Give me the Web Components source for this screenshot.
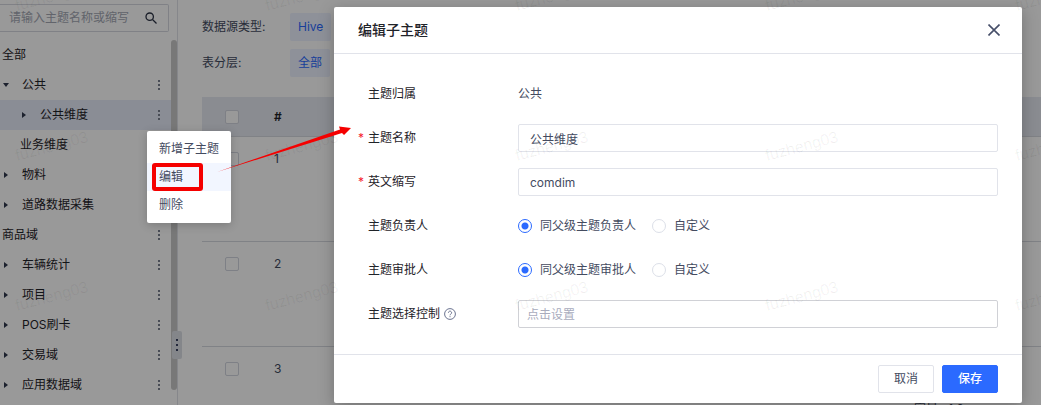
<!DOCTYPE html>
<html lang="zh-CN">
<head>
<meta charset="UTF-8">
<meta name="viewport" content="width=device-width, initial-scale=1">
<title>编辑子主题</title>
<style>
    html, body { height: 100%; margin: 0; }
    body {
        --primary: #2b6aff;
        --text: #1f2329;
        --text-2: #444b5f;
        --line: #e1e3ea;
        font: 12px/20px Inter, "Noto Sans CJK SC", sans-serif;
        color: var(--text);
        background: #fff;
        overflow: hidden;
    }
</style>
</head>
<body>
<topic-page></topic-page>

<script>
class BaseElement extends HTMLElement {
    constructor() {
        super();
        this.attachShadow({ mode: 'open' });
    }

    connectedCallback() {
        this.shadowRoot.innerHTML = this.template();
    }
}

// One line of the topic tree: caret, name, "more" button
class TreeItem extends BaseElement {
    template() {
        const caret = this.getAttribute('caret');
        const path = caret === 'open' ? 'M0 1h6L3 5z' : 'M1 0v6l4-3z';
        return `
            <style>
                :host { display: flex; align-items: center; height: 30px; padding: 0 7px 0 2px; }
                :host([level="1"]) { padding-left: 3px; }
                :host([level="2"]) { padding-left: 21px; }
                :host([level="leaf"]) { padding-left: 20px; }
                :host([active]) { background: #e6ebf8; }
                .caret { width: 6px; height: 6px; margin-right: 13px; fill: #30384d; }
                .name { flex: 1; white-space: nowrap; }
                button { display: flex; padding: 4px; border: 0; background: none; }
                button svg { width: 2px; height: 10px; fill: #7b8190; }
            </style>
            ${caret ? `<svg class="caret" viewBox="0 0 6 6"><path d="${path}"/></svg>` : ''}
            <span class="name"><slot></slot></span>
            ${this.hasAttribute('more') ? `
            <button type="button" aria-label="更多">
                <svg viewBox="0 0 2 10"><path d="M0 0h2v2H0zM0 4h2v2H0zM0 8h2v2H0z"/></svg>
            </button>` : ''}
        `;
    }
}
customElements.define('tree-item', TreeItem);

class TopicTree extends BaseElement {
    template() {
        return `
            <style>
                :host { display: flex; flex-direction: column; box-sizing: border-box; border-right: 1px solid #dfe1e8; position: relative; }
                .search { display: flex; align-items: center; box-sizing: border-box; height: 28px; margin: 4px 8px 8px 0; padding: 0 11px 0 9px; border: 1px solid #d5d8e0; border-left: 0; border-radius: 0 2px 2px 0; }
                input { flex: 1; min-width: 0; padding: 0; border: 0; outline: 0; font: inherit; background: none; }
                input::placeholder { color: #a3a7b3; }
                .search svg { flex: none; width: 12px; height: 12px; fill: none; stroke: #2c3345; stroke-width: 1.3; }
                .scroll { display: flex; flex: 1; min-height: 0; }
                .list { flex: 1; }
                .thumb { width: 6px; margin-bottom: 15px; border-radius: 3px; background: #c8c8c8; }
                /* drag handle sits over the pane border */
                .handle { position: absolute; right: -5px; top: 331px; display: flex; align-items: center; justify-content: center; width: 10px; height: 28px; border-radius: 2px; background: #dddfe6; }
                .handle svg { width: 2px; height: 12px; fill: #3b4363; }
            </style>
            <div class="search">
                <input type="text" aria-label="搜索主题" placeholder="请输入主题名称或缩写">
                <svg viewBox="0 0 12 12"><circle cx="4.7" cy="4.7" r="3.7"/><path d="M7.5 7.5l4 4"/></svg>
            </div>
            <div class="scroll">
                <div class="list">
                    <tree-item>全部</tree-item>
                    <tree-item level="1" caret="open" more>公共</tree-item>
                    <tree-item level="2" caret="closed" more active>公共维度</tree-item>
                    <tree-item level="leaf">业务维度</tree-item>
                    <tree-item level="1" caret="closed" more>物料</tree-item>
                    <tree-item level="1" caret="closed" more>道路数据采集</tree-item>
                    <tree-item more>商品域</tree-item>
                    <tree-item level="1" caret="closed" more>车辆统计</tree-item>
                    <tree-item level="1" caret="closed" more>项目</tree-item>
                    <tree-item level="1" caret="closed" more>POS刷卡</tree-item>
                    <tree-item level="1" caret="closed" more>交易域</tree-item>
                    <tree-item level="1" caret="closed" more>应用数据域</tree-item>
                </div>
                <div class="thumb"></div>
            </div>
            <div class="handle"><svg viewBox="0 0 2 12"><path d="M0 0h2v2H0zM0 5h2v2H0zM0 10h2v2H0z"/></svg></div>
        `;
    }
}
customElements.define('topic-tree', TopicTree);

class FilterRow extends BaseElement {
    template() {
        return `
            <style>
                :host { display: flex; align-items: center; color: var(--text-2); }
                .label { width: 88px; }
                button { height: 28px; padding: 0 8px; border: 0; border-radius: 2px; font: inherit; color: var(--primary); background: #edf2ff; }
            </style>
            <span class="label">${this.getAttribute('label')}:</span>
            <button type="button"><slot></slot></button>
        `;
    }
}
customElements.define('filter-row', FilterRow);

class TableList extends BaseElement {
    template() {
        const row = (n, size = '') => `
            <tr>
                <td><input type="checkbox" aria-label="选择第${n}行"></td>
                <td>${n}</td>
                <td>${size}</td>
            </tr>`;
        return `
            <style>
                :host { display: block; }
                table { width: 100%; border-collapse: separate; border-spacing: 0; table-layout: fixed; }
                th, td { box-sizing: border-box; padding: 0 12px; text-align: left; border-bottom: 1px solid #d6d9e0; }
                th { height: 40px; background: #e6e9f2; font-weight: 600; }
                td { height: 105px; padding-top: 12px; vertical-align: top; color: var(--text-2); }
                th:first-child, td:first-child { width: 60px; padding-left: 23px; }
                th:nth-child(2) { width: 640px; }
                .size { display: block; padding-top: 40px; }
                input { display: block; box-sizing: border-box; appearance: none; width: 14px; height: 14px; margin: 3px 0; border: 1px solid #d2d5df; border-radius: 2px; background: #fff; }
            </style>
            <table>
                <thead><tr><th><input type="checkbox" aria-label="全选"></th><th>#</th><th></th></tr></thead>
                <tbody>${row(1)}${row(2)}${row(3, '<span class="size">容量: &nbsp;1.6</span>')}</tbody>
            </table>
        `;
    }
}
customElements.define('table-list', TableList);

class ContextMenu extends BaseElement {
    template() {
        return `
            <style>
                :host { display: block; padding: 4px 0; border-radius: 2px; background: #fff; box-shadow: 0 2px 10px rgba(0, 0, 0, .2); }
                button { display: block; width: 100%; height: 28px; padding: 0 12px; border: 0; font: inherit; text-align: left; white-space: nowrap; color: var(--text-2); background: none; }
                .hover { background: #f2f6ff; }
            </style>
            <button type="button">新增子主题</button>
            <button type="button" class="hover">编辑</button>
            <button type="button">删除</button>
        `;
    }
}
customElements.define('context-menu', ContextMenu);

class FormRow extends BaseElement {
    template() {
        return `
            <style>
                :host { display: flex; align-items: center; height: 28px; }
                .label { display: flex; align-items: center; gap: 4px; flex: 0 0 160px; }
                .mark { width: 6px; color: #f5222d; }
                .control { flex: 1; display: flex; align-items: center; gap: 16px; color: var(--text-2); }
            </style>
            <div class="label"><span class="mark">${this.hasAttribute('required') ? '*' : ''}</span><slot name="label"></slot></div>
            <div class="control"><slot></slot></div>
        `;
    }
}
customElements.define('form-row', FormRow);

class EditDialog extends BaseElement {
    template() {
        const radios = (name, first) => `
            <label class="radio"><input type="radio" name="${name}" checked>${first}</label>
            <label class="radio"><input type="radio" name="${name}">自定义</label>`;
        return `
            <style>
                :host { display: block; border-radius: 2px; background: #fff; box-shadow: 0 4px 16px rgba(0, 0, 0, .25); }
                header { display: flex; align-items: center; justify-content: space-between; height: 46px; padding: 0 22px 0 24px; border-bottom: 1px solid var(--line); }
                h2 { margin: 0; font-size: 14px; font-weight: 500; }
                header button { display: flex; padding: 0; border: 0; background: none; }
                header svg { width: 12px; height: 12px; stroke: #464f69; stroke-width: 1.6; }
                form { display: flex; flex-direction: column; gap: 16px; padding: 26px 24px; }
                input[type="text"] { flex: 1; box-sizing: border-box; min-width: 0; height: 28px; padding: 0 11px; border: 1px solid var(--line); border-radius: 2px; font: inherit; color: var(--text-2); background: #fff; }
                #control { padding: 0 8px; border-color: #d0d1d6; }
                #control::placeholder { color: #a9acbd; }
                .radio { display: flex; align-items: center; gap: 8px; }
                .radio input { appearance: none; box-sizing: border-box; width: 14px; height: 14px; margin: 0; border: 1px solid #dcdfe8; border-radius: 50%; }
                .radio input:checked { border-color: var(--primary); background: radial-gradient(circle, var(--primary) 3px, #fff 4px); }
                .help { width: 12px; height: 12px; fill: none; stroke: #6b7390; }
                footer { display: flex; justify-content: flex-end; gap: 8px; padding: 10px 24px; border-top: 1px solid var(--line); }
                footer button { box-sizing: border-box; width: 56px; height: 28px; padding: 0; border: 1px solid var(--line); border-radius: 2px; font: inherit; color: var(--text-2); background: #fff; }
                footer .primary { border-color: var(--primary); background: var(--primary); color: #fff; font-weight: 500; }
            </style>
            <header>
                <h2>编辑子主题</h2>
                <button type="button" aria-label="关闭"><svg viewBox="0 0 12 12"><path d="M.5.5l11 11M11.5.5l-11 11"/></svg></button>
            </header>
            <form>
                <form-row><span slot="label">主题归属</span>公共</form-row>
                <form-row required><label slot="label" for="name">主题名称</label><input id="name" type="text" value="公共维度"></form-row>
                <form-row required><label slot="label" for="code">英文缩写</label><input id="code" type="text" value="comdim"></form-row>
                <form-row><span slot="label">主题负责人</span>${radios('owner', '同父级主题负责人')}</form-row>
                <form-row><span slot="label">主题审批人</span>${radios('approver', '同父级主题审批人')}</form-row>
                <form-row>
                    <label slot="label" for="control">主题选择控制</label>
                    <svg slot="label" class="help" viewBox="0 0 12 12"><circle cx="6" cy="6" r="5.4"/><path d="M4.4 4.7a1.6 1.6 0 1 1 2.4 1.4c-.6.3-.8.6-.8 1.2M6 8.2v1"/></svg>
                    <input id="control" type="text" placeholder="点击设置">
                </form-row>
            </form>
            <footer>
                <button type="button">取消</button>
                <button type="button" class="primary">保存</button>
            </footer>
        `;
    }
}
customElements.define('edit-dialog', EditDialog);

// Repeats the user name over the whole window
class WaterMark extends BaseElement {
    template() {
        const name = this.getAttribute('name');
        let marks = '';
        for (let y = 11; y < window.innerHeight; y += 150) {
            for (let x = 17; x < window.innerWidth; x += 250) {
                marks += `<text transform="translate(${x} ${y}) rotate(-15)">${name}</text>`;
            }
        }
        return `
            <style>
                :host { display: block; pointer-events: none; }
                svg { display: block; width: 100%; height: 100%; }
                text { font: 16px "Liberation Sans", sans-serif; fill: rgba(0, 0, 0, .06); }
            </style>
            <svg aria-hidden="true">${marks}</svg>
        `;
    }
}
customElements.define('water-mark', WaterMark);

class TopicPage extends BaseElement {
    template() {
        return `
            <style>
                :host { display: flex; height: 100vh; position: relative; overflow: hidden; }
                topic-tree { flex: none; width: 178px; }
                main { flex: 1; min-width: 0; padding: 13px 0 0 24px; }
                .filters { display: flex; flex-direction: column; gap: 8px; margin-bottom: 20px; }
                .mask { position: absolute; inset: 0; box-sizing: border-box; padding: 7px 19px 0 334px; background: rgba(0, 0, 0, .4); }
                water-mark { position: absolute; inset: 0; }
                context-menu { position: absolute; left: 147px; top: 131px; }
                .note { position: absolute; left: 0; top: 0; width: 360px; height: 200px; pointer-events: none; }
            </style>
            <topic-tree></topic-tree>
            <main>
                <div class="filters">
                    <filter-row label="数据源类型">Hive</filter-row>
                    <filter-row label="表分层">全部</filter-row>
                </div>
                <table-list></table-list>
            </main>
            <div class="mask"><edit-dialog></edit-dialog></div>
            <water-mark name="fuzheng03"></water-mark>
            <context-menu></context-menu>
            <svg class="note" viewBox="0 0 360 200">
                <rect x="154" y="165" width="47" height="24" rx="1" fill="none" stroke="#f50000" stroke-width="4"/>
                <path fill="#f50000" d="M217 172L340 129.500L339 126.500L351 128L344 135L342 133z"/>
            </svg>
        `;
    }
}
customElements.define('topic-page', TopicPage);
</script>
</body>
</html>
